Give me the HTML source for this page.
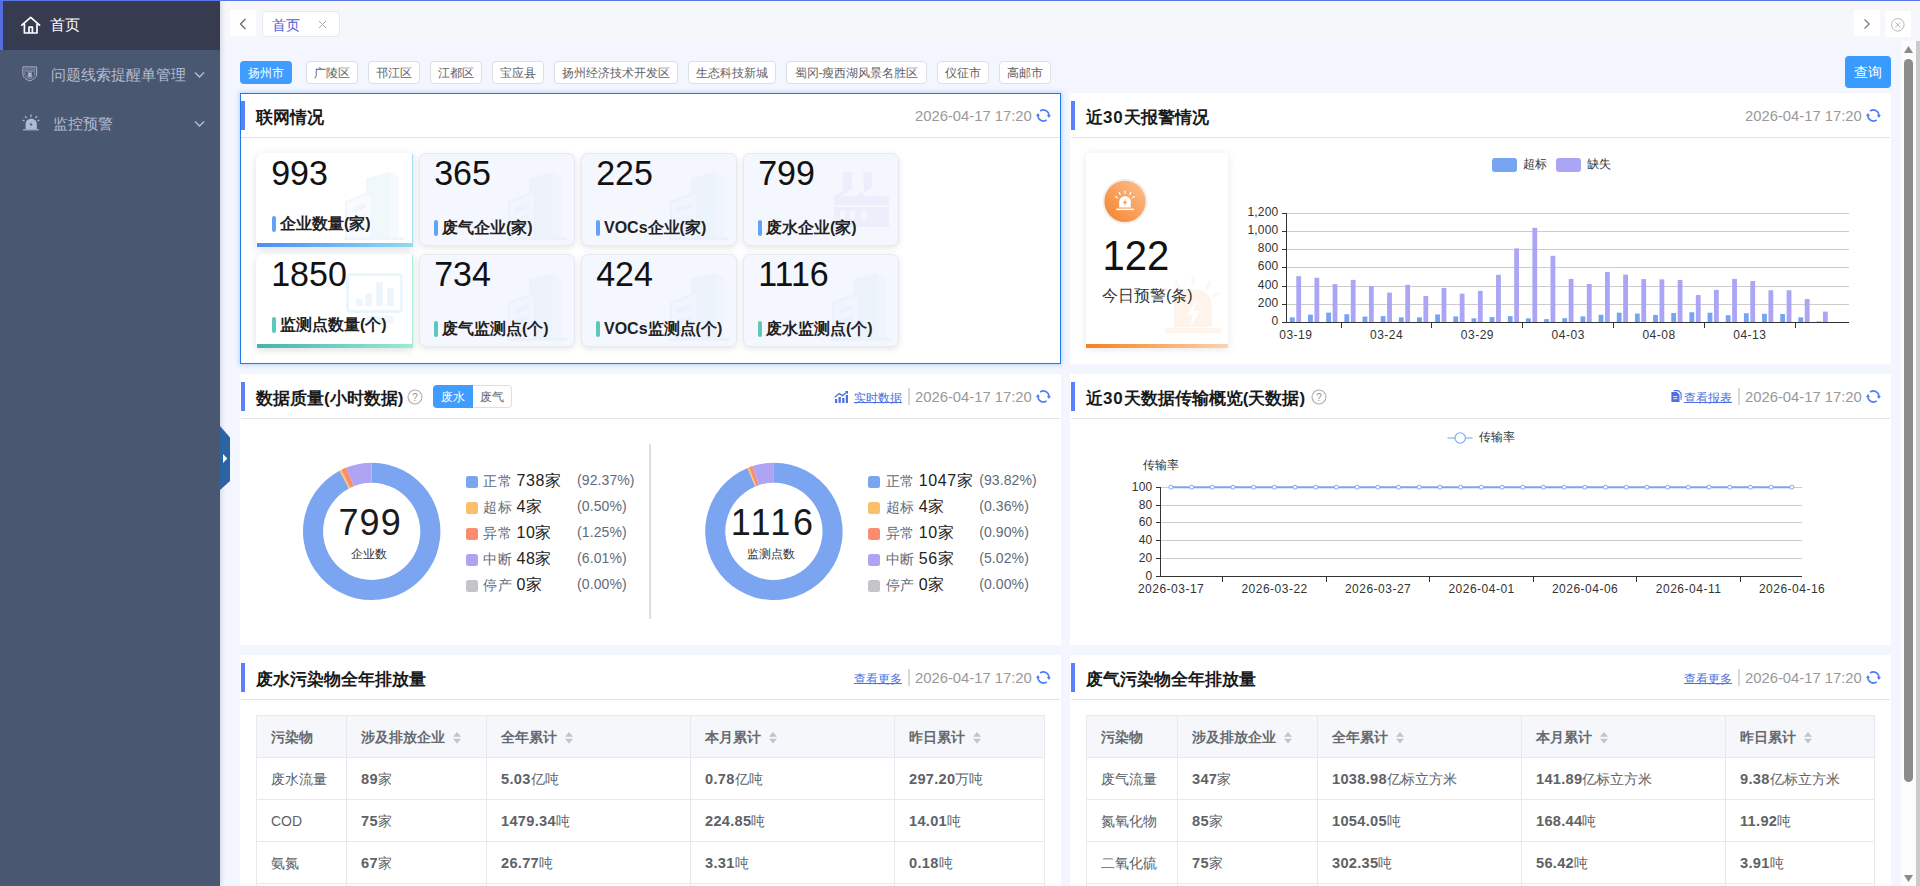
<!DOCTYPE html><html><head><meta charset="utf-8"><title>dashboard</title><style>
html,body{margin:0;padding:0}body{width:1920px;height:886px;overflow:hidden;position:relative;background:#f3f6fe;font-family:"Liberation Sans", sans-serif;}
div{box-sizing:border-box}svg{position:absolute;overflow:visible}
</style></head><body>
<div style="position:absolute;left:220px;top:0px;width:1700px;height:41px;background:#f5f7fa"></div>
<div style="position:absolute;left:0px;top:0px;width:1920px;height:1px;background:#5a76e8;z-index:50"></div>
<div style="position:absolute;left:0px;top:0px;width:220px;height:886px;background:#4a5770;box-shadow:1px 0 5px rgba(0,21,41,.16);z-index:20"></div>
<div style="position:absolute;left:0;top:0;width:220px;height:886px;z-index:21">
<div style="position:absolute;left:0px;top:1px;width:220px;height:49px;background:#363b4f"></div>
<div style="position:absolute;left:0px;top:1px;width:3px;height:49px;background:#566ddf"></div>
<svg style="left:20px;top:15px" width="22" height="20" viewBox="0 0 22 20"><path d="M1.8 10.2 L10.7 2.4 L19.6 10.2 M4.4 9 V18 H17 V9 M9 18 V12.2 H12.4 V18" fill="none" stroke="#fff" stroke-width="1.7" stroke-linejoin="round" stroke-linecap="round"/></svg>
<div style="position:absolute;top:15.40px;line-height:20px;font-size:15px;color:#fff;font-weight:normal;white-space:nowrap;left:50.00px;">首页</div>
<svg style="left:22px;top:66px" width="16" height="16" viewBox="0 0 16 16"><path d="M0.9 0.9 H14.7 V8 C14.7 11.4 11.5 13.6 7.8 14.9 C4.1 13.6 0.9 11.4 0.9 8 Z" fill="none" stroke="#aeb5d1" stroke-width="1"/><path d="M2.9 2.9 H12.7 V8 C12.7 10.2 10.5 11.7 7.8 12.7 C5.1 11.7 2.9 10.2 2.9 8 Z" fill="none" stroke="#aeb5d1" stroke-width=".8" opacity=".75"/><g fill="#aeb5d1"><rect x="5.8" y="6.4" width="4" height="4.8" opacity=".9"/><rect x="4.4" y="4.2" width="1.3" height="1.7" opacity=".8"/><rect x="6.5" y="4.2" width="1.3" height="1.7" opacity=".8"/><rect x="8.6" y="4.2" width="1.3" height="1.7" opacity=".8"/><rect x="10.4" y="4.2" width="1.1" height="1.7" opacity=".8"/></g></svg>
<div style="position:absolute;top:64.60px;line-height:20px;font-size:15px;color:#b3bbd3;font-weight:normal;white-space:nowrap;left:51.00px;">问题线索提醒单管理</div>
<svg style="left:194px;top:71px" width="11" height="8" viewBox="0 0 11 8"><path d="M1 1.5 L5.5 6 L10 1.5" fill="none" stroke="#b3bbd3" stroke-width="1.5"/></svg>
<svg style="left:22px;top:114px" width="18" height="17" viewBox="0 0 18 17"><path d="M3.6 15.2 V10.5 C3.6 7 5.8 4.8 9.2 4.8 C12.6 4.8 14.8 7 14.8 10.5 V15.2 Z" fill="#b3bad3"/><path d="M1 15.8 H17" stroke="#b3bad3" stroke-width="1.1"/><path d="M9 0.5 V3 M3 2.2 L4.6 4.2 M15 2.2 L13.4 4.2 M0.6 6 L2.6 7 M17.4 6 L15.4 7" stroke="#b3bad3" stroke-width="1.2"/><path d="M9.6 7.5 L7.6 11 H9.2 L8.4 13.6 L10.6 10 H9 Z" fill="#4a5770"/></svg>
<div style="position:absolute;top:113.50px;line-height:20px;font-size:15px;color:#b3bbd3;font-weight:normal;white-space:nowrap;left:53.00px;">监控预警</div>
<svg style="left:194px;top:120px" width="11" height="8" viewBox="0 0 11 8"><path d="M1 1.5 L5.5 6 L10 1.5" fill="none" stroke="#b3bbd3" stroke-width="1.5"/></svg>
</div>
<svg style="left:220px;top:426px;z-index:30" width="10" height="64" viewBox="0 0 10 64"><path d="M0 0 L10 11.5 V55 L0 64 Z" fill="#2d62a3"/><path d="M3 28 L7.3 32.5 L3 37 Z" fill="#fff"/></svg>
<div style="position:absolute;left:230px;top:10px;width:26px;height:26px;background:#fff"></div>
<svg style="left:239.3px;top:18px" width="8" height="12" viewBox="0 0 8 12"><path d="M6.5 1 L1.5 6 L6.5 11" fill="none" stroke="#666" stroke-width="1.3"/></svg>
<div style="position:absolute;left:262px;top:11px;width:78px;height:26px;background:#fff;border:1px solid #e6e8ee;border-radius:4px"></div>
<div style="position:absolute;top:14.60px;line-height:20px;font-size:14px;color:#4f5fd6;font-weight:normal;white-space:nowrap;left:272.00px;">首页</div>
<svg style="left:318px;top:20px" width="9" height="9" viewBox="0 0 9 9"><path d="M1 1 L8 8 M8 1 L1 8" stroke="#aaa" stroke-width="1"/></svg>
<div style="position:absolute;left:1854px;top:10px;width:26px;height:26px;background:#fff"></div>
<svg style="left:1863px;top:18.3px" width="8" height="12" viewBox="0 0 8 12"><path d="M1.5 1.4 L6.2 6 L1.5 10.6" fill="none" stroke="#888" stroke-width="1.4"/></svg>
<div style="position:absolute;left:1885px;top:11px;width:26px;height:26px;background:#fff"></div>
<svg style="left:1890px;top:17px" width="16" height="16" viewBox="0 0 16 16"><circle cx="7.8" cy="7.8" r="6.3" fill="none" stroke="#b5b0ac" stroke-width="0.9"/><path d="M5.3 5.3 L10.3 10.3 M10.3 5.3 L5.3 10.3" stroke="#aaa" stroke-width="0.9"/></svg>
<div style="position:absolute;left:240px;top:61px;width:52px;height:23px;background:#3f9dff;border-radius:4px;color:#fff;font-size:12px;line-height:24px;text-align:center;white-space:nowrap">扬州市</div>
<div style="position:absolute;left:306px;top:61px;width:52px;height:23px;background:#fff;border:1px solid #dcdfe6;border-radius:4px;color:#5f6266;font-size:12px;line-height:22px;text-align:center;white-space:nowrap">广陵区</div>
<div style="position:absolute;left:368px;top:61px;width:52px;height:23px;background:#fff;border:1px solid #dcdfe6;border-radius:4px;color:#5f6266;font-size:12px;line-height:22px;text-align:center;white-space:nowrap">邗江区</div>
<div style="position:absolute;left:430px;top:61px;width:52px;height:23px;background:#fff;border:1px solid #dcdfe6;border-radius:4px;color:#5f6266;font-size:12px;line-height:22px;text-align:center;white-space:nowrap">江都区</div>
<div style="position:absolute;left:492px;top:61px;width:52px;height:23px;background:#fff;border:1px solid #dcdfe6;border-radius:4px;color:#5f6266;font-size:12px;line-height:22px;text-align:center;white-space:nowrap">宝应县</div>
<div style="position:absolute;left:554px;top:61px;width:124px;height:23px;background:#fff;border:1px solid #dcdfe6;border-radius:4px;color:#5f6266;font-size:12px;line-height:22px;text-align:center;white-space:nowrap">扬州经济技术开发区</div>
<div style="position:absolute;left:688px;top:61px;width:88px;height:23px;background:#fff;border:1px solid #dcdfe6;border-radius:4px;color:#5f6266;font-size:12px;line-height:22px;text-align:center;white-space:nowrap">生态科技新城</div>
<div style="position:absolute;left:786px;top:61px;width:141px;height:23px;background:#fff;border:1px solid #dcdfe6;border-radius:4px;color:#5f6266;font-size:12px;line-height:22px;text-align:center;white-space:nowrap">蜀冈-瘦西湖风景名胜区</div>
<div style="position:absolute;left:937px;top:61px;width:52px;height:23px;background:#fff;border:1px solid #dcdfe6;border-radius:4px;color:#5f6266;font-size:12px;line-height:22px;text-align:center;white-space:nowrap">仪征市</div>
<div style="position:absolute;left:999px;top:61px;width:52px;height:23px;background:#fff;border:1px solid #dcdfe6;border-radius:4px;color:#5f6266;font-size:12px;line-height:22px;text-align:center;white-space:nowrap">高邮市</div>
<div style="position:absolute;left:1845px;top:56px;width:46px;height:32px;background:#3a9bff;border-radius:4px;color:#fff;font-size:14px;line-height:32px;text-align:center;white-space:nowrap">查询</div>
<div style="position:absolute;left:1901px;top:41px;width:15px;height:845px;background:#fcfcfc"></div>
<div style="position:absolute;left:1916px;top:41px;width:4px;height:845px;background:#cbcbcb"></div>
<div style="position:absolute;left:1904px;top:59px;width:9px;height:723px;background:#8c8c8c;border-radius:4.5px"></div>
<svg style="left:1904px;top:46px" width="9" height="7" viewBox="0 0 9 7"><path d="M0 7 L4.5 0 L9 7 Z" fill="#8a8a8a"/></svg>
<svg style="left:1904px;top:875px" width="9" height="7" viewBox="0 0 9 7"><path d="M0 0 L4.5 7 L9 0 Z" fill="#8a8a8a"/></svg>
<div style="position:absolute;left:240px;top:93px;width:821px;height:271px;background:#fff;border:1px solid #1f7be6;box-shadow:0 0 4px 1px rgba(64,150,255,.35)"></div>
<div style="position:absolute;left:241px;top:101px;width:4px;height:29px;background:#5b80fb"></div>
<div style="position:absolute;left:241px;top:137px;width:819px;height:1px;background:#e4e4e4"></div>
<div style="position:absolute;top:107.50px;line-height:20px;font-size:17px;color:#1a1a1a;font-weight:bold;white-space:nowrap;left:256.00px;">联网情况</div>
<div style="position:absolute;top:105.80px;line-height:20px;font-size:14.8px;color:#999;font-weight:normal;white-space:nowrap;right:888.20px;text-align:right;">2026-04-17 17:20</div>
<svg style="left:1036px;top:109px" width="15" height="14" viewBox="0 0 15 14"><g fill="none" stroke="#4d7cf5" stroke-width="1.6"><path d="M4.1 2.1 A5.5 5.5 0 0 1 12.9 6.2"/><path d="M10.7 10.9 A5.5 5.5 0 0 1 1.9 6.8"/></g><path d="M10.9 5.9 H14.9 L12.9 9.1 Z" fill="#4d7cf5"/><path d="M0 7.1 H3.9 L1.95 3.9 Z" fill="#4d7cf5"/></svg>
<div style="position:absolute;left:256px;top:153px;width:157px;height:94px;background:#fff;border-radius:7px 0 0 0;box-shadow:0 2px 8px rgba(0,0,0,.13);"></div>
<div style="position:absolute;left:412px;top:154px;width:1px;height:93px;background:#a5dcf2"></div>
<div style="position:absolute;left:256.5px;top:243px;width:156.5px;height:4px;background:linear-gradient(90deg,#4b8df5,#8fdcf2)"></div>
<svg style="left:344px;top:172px" width="60" height="70" viewBox="0 0 60 70"><g fill="#f0f7fc"><path d="M22 6 L46 0 V66 H22 Z" opacity=".9"/><path d="M46 0 L55 5 V66 H46 Z" opacity=".6"/><path d="M2 30 L28 20 V66 H2 Z" fill="#f9fcfe" stroke="#f0f7fc" stroke-width="2"/><path d="M8 36 L22 31 V36 L8 41 Z M8 46 L22 42 V47 L8 51 Z M8 56 L22 53 V58 L8 61 Z"/><rect x="0" y="65" width="60" height="3"/></g></svg>
<div style="position:absolute;top:151.60px;line-height:40px;font-size:34px;color:#111;font-weight:normal;white-space:nowrap;left:271.20px;transform:scaleY(1.055);transform-origin:50% 50%;">993</div>
<div style="position:absolute;left:272px;top:216px;width:4px;height:16px;background:#63a3f6;border-radius:2px"></div>
<div style="position:absolute;top:214.30px;line-height:20px;font-size:16px;color:#222;font-weight:bold;white-space:nowrap;left:280.00px;">企业数量(家)</div>
<div style="position:absolute;left:418.5px;top:153px;width:156px;height:93px;background:#f4f7fe;border:1px solid #e7e9f0;border-radius:7px;box-shadow:0 2px 6px rgba(0,0,0,.10);"></div>
<svg style="left:507px;top:172px" width="60" height="70" viewBox="0 0 60 70"><g fill="#ecf2fb"><path d="M22 6 L46 0 V66 H22 Z" opacity=".9"/><path d="M46 0 L55 5 V66 H46 Z" opacity=".6"/><path d="M2 30 L28 20 V66 H2 Z" fill="#f1f5fd" stroke="#ecf2fb" stroke-width="2"/><path d="M8 36 L22 31 V36 L8 41 Z M8 46 L22 42 V47 L8 51 Z M8 56 L22 53 V58 L8 61 Z"/><rect x="0" y="65" width="60" height="3"/></g></svg>
<div style="position:absolute;top:151.60px;line-height:40px;font-size:34px;color:#111;font-weight:normal;white-space:nowrap;left:434.20px;transform:scaleY(1.055);transform-origin:50% 50%;">365</div>
<div style="position:absolute;left:434px;top:219.5px;width:4px;height:16px;background:#63a3f6;border-radius:2px"></div>
<div style="position:absolute;top:217.80px;line-height:20px;font-size:16px;color:#222;font-weight:bold;white-space:nowrap;left:442.00px;">废气企业(家)</div>
<div style="position:absolute;left:580.5px;top:153px;width:156px;height:93px;background:#f4f7fe;border:1px solid #e7e9f0;border-radius:7px;box-shadow:0 2px 6px rgba(0,0,0,.10);"></div>
<svg style="left:669px;top:172px" width="60" height="70" viewBox="0 0 60 70"><g fill="#ecf2fb"><path d="M22 6 L46 0 V66 H22 Z" opacity=".9"/><path d="M46 0 L55 5 V66 H46 Z" opacity=".6"/><path d="M2 30 L28 20 V66 H2 Z" fill="#f1f5fd" stroke="#ecf2fb" stroke-width="2"/><path d="M8 36 L22 31 V36 L8 41 Z M8 46 L22 42 V47 L8 51 Z M8 56 L22 53 V58 L8 61 Z"/><rect x="0" y="65" width="60" height="3"/></g></svg>
<div style="position:absolute;top:151.60px;line-height:40px;font-size:34px;color:#111;font-weight:normal;white-space:nowrap;left:596.20px;transform:scaleY(1.055);transform-origin:50% 50%;">225</div>
<div style="position:absolute;left:596px;top:219.5px;width:4px;height:16px;background:#63a3f6;border-radius:2px"></div>
<div style="position:absolute;top:217.80px;line-height:20px;font-size:16px;color:#222;font-weight:bold;white-space:nowrap;left:604.00px;">VOCs企业(家)</div>
<div style="position:absolute;left:742.5px;top:153px;width:156px;height:93px;background:#f4f7fe;border:1px solid #e7e9f0;border-radius:7px;box-shadow:0 2px 6px rgba(0,0,0,.10);"></div>
<svg style="left:834px;top:172px" width="56" height="56" viewBox="0 0 56 56"><g fill="#eceffb"><path d="M9 0 H18 V17 L9 23 Z"/><path d="M29 0 H38 V15 L30 21 Z"/><path d="M0 24 L9 19 V24 H22 L29 19 V24 H40 L42 22 V24 H55 V33 H0 Z"/><path d="M0 35 H55 V55 H0 Z M6 39 V47 H11 V39 Z M16 39 V47 H21 V39 Z M27 39 V47 H33 V39 Z" fill-rule="evenodd"/></g></svg>
<div style="position:absolute;top:151.60px;line-height:40px;font-size:34px;color:#111;font-weight:normal;white-space:nowrap;left:758.20px;transform:scaleY(1.055);transform-origin:50% 50%;">799</div>
<div style="position:absolute;left:758px;top:219.5px;width:4px;height:16px;background:#63a3f6;border-radius:2px"></div>
<div style="position:absolute;top:217.80px;line-height:20px;font-size:16px;color:#222;font-weight:bold;white-space:nowrap;left:766.00px;">废水企业(家)</div>
<div style="position:absolute;left:256px;top:254px;width:157px;height:94px;background:#fff;border-radius:7px 0 0 0;box-shadow:0 2px 8px rgba(0,0,0,.13);"></div>
<div style="position:absolute;left:412px;top:255px;width:1px;height:93px;background:#a9ecd8"></div>
<div style="position:absolute;left:256.5px;top:344px;width:156.5px;height:4px;background:linear-gradient(90deg,#44b3ad,#9debd3)"></div>
<svg style="left:345px;top:272px" width="60" height="56" viewBox="0 0 60 56"><rect x="2.5" y="2.5" width="54" height="37" rx="3" fill="none" stroke="#ebf5fc" stroke-width="3"/><g fill="#ecf5fc"><rect x="11" y="27.2" width="6.5" height="6.8"/><rect x="20.6" y="21.5" width="6.5" height="12.5"/><rect x="31.2" y="9.8" width="6.5" height="24.2"/><rect x="42.2" y="15.8" width="6.5" height="18.2"/><rect x="21" y="44" width="28" height="8" opacity=".75"/></g></svg>
<div style="position:absolute;top:252.60px;line-height:40px;font-size:34px;color:#111;font-weight:normal;white-space:nowrap;left:271.20px;transform:scaleY(1.055);transform-origin:50% 50%;">1850</div>
<div style="position:absolute;left:272px;top:317px;width:4px;height:16px;background:#5cc8bb;border-radius:2px"></div>
<div style="position:absolute;top:315.30px;line-height:20px;font-size:16px;color:#222;font-weight:bold;white-space:nowrap;left:280.00px;">监测点数量(个)</div>
<div style="position:absolute;left:418.5px;top:254px;width:156px;height:93px;background:#f4f7fe;border:1px solid #e7e9f0;border-radius:7px;box-shadow:0 2px 6px rgba(0,0,0,.10);"></div>
<svg style="left:507px;top:273px" width="60" height="70" viewBox="0 0 60 70"><g fill="#ecf2fb"><path d="M22 6 L46 0 V66 H22 Z" opacity=".9"/><path d="M46 0 L55 5 V66 H46 Z" opacity=".6"/><path d="M2 30 L28 20 V66 H2 Z" fill="#f1f5fd" stroke="#ecf2fb" stroke-width="2"/><path d="M8 36 L22 31 V36 L8 41 Z M8 46 L22 42 V47 L8 51 Z M8 56 L22 53 V58 L8 61 Z"/><rect x="0" y="65" width="60" height="3"/></g></svg>
<div style="position:absolute;top:252.60px;line-height:40px;font-size:34px;color:#111;font-weight:normal;white-space:nowrap;left:434.20px;transform:scaleY(1.055);transform-origin:50% 50%;">734</div>
<div style="position:absolute;left:434px;top:320.5px;width:4px;height:16px;background:#5cc8bb;border-radius:2px"></div>
<div style="position:absolute;top:318.80px;line-height:20px;font-size:16px;color:#222;font-weight:bold;white-space:nowrap;left:442.00px;">废气监测点(个)</div>
<div style="position:absolute;left:580.5px;top:254px;width:156px;height:93px;background:#f4f7fe;border:1px solid #e7e9f0;border-radius:7px;box-shadow:0 2px 6px rgba(0,0,0,.10);"></div>
<svg style="left:669px;top:273px" width="60" height="70" viewBox="0 0 60 70"><g fill="#ecf2fb"><path d="M22 6 L46 0 V66 H22 Z" opacity=".9"/><path d="M46 0 L55 5 V66 H46 Z" opacity=".6"/><path d="M2 30 L28 20 V66 H2 Z" fill="#f1f5fd" stroke="#ecf2fb" stroke-width="2"/><path d="M8 36 L22 31 V36 L8 41 Z M8 46 L22 42 V47 L8 51 Z M8 56 L22 53 V58 L8 61 Z"/><rect x="0" y="65" width="60" height="3"/></g></svg>
<div style="position:absolute;top:252.60px;line-height:40px;font-size:34px;color:#111;font-weight:normal;white-space:nowrap;left:596.20px;transform:scaleY(1.055);transform-origin:50% 50%;">424</div>
<div style="position:absolute;left:596px;top:320.5px;width:4px;height:16px;background:#5cc8bb;border-radius:2px"></div>
<div style="position:absolute;top:318.80px;line-height:20px;font-size:16px;color:#222;font-weight:bold;white-space:nowrap;left:604.00px;">VOCs监测点(个)</div>
<div style="position:absolute;left:742.5px;top:254px;width:156px;height:93px;background:#f4f7fe;border:1px solid #e7e9f0;border-radius:7px;box-shadow:0 2px 6px rgba(0,0,0,.10);"></div>
<svg style="left:831px;top:273px" width="60" height="70" viewBox="0 0 60 70"><g fill="#ecf2fb"><path d="M22 6 L46 0 V66 H22 Z" opacity=".9"/><path d="M46 0 L55 5 V66 H46 Z" opacity=".6"/><path d="M2 30 L28 20 V66 H2 Z" fill="#f1f5fd" stroke="#ecf2fb" stroke-width="2"/><path d="M8 36 L22 31 V36 L8 41 Z M8 46 L22 42 V47 L8 51 Z M8 56 L22 53 V58 L8 61 Z"/><rect x="0" y="65" width="60" height="3"/></g></svg>
<div style="position:absolute;top:252.60px;line-height:40px;font-size:34px;color:#111;font-weight:normal;white-space:nowrap;left:758.20px;transform:scaleY(1.055);transform-origin:50% 50%;">1116</div>
<div style="position:absolute;left:758px;top:320.5px;width:4px;height:16px;background:#5cc8bb;border-radius:2px"></div>
<div style="position:absolute;top:318.80px;line-height:20px;font-size:16px;color:#222;font-weight:bold;white-space:nowrap;left:766.00px;">废水监测点(个)</div>
<div style="position:absolute;left:1070px;top:93px;width:821px;height:271px;background:#fff"></div>
<div style="position:absolute;left:1071px;top:101px;width:4px;height:29px;background:#5b80fb"></div>
<div style="position:absolute;left:1071px;top:137px;width:819px;height:1px;background:#e4e4e4"></div>
<div style="position:absolute;top:107.50px;line-height:20px;font-size:17px;color:#1a1a1a;font-weight:bold;white-space:nowrap;left:1086.00px;">近<span style="letter-spacing:.9px">30</span>天报警情况</div>
<div style="position:absolute;top:105.80px;line-height:20px;font-size:14.8px;color:#999;font-weight:normal;white-space:nowrap;right:58.20px;text-align:right;">2026-04-17 17:20</div>
<svg style="left:1866px;top:109px" width="15" height="14" viewBox="0 0 15 14"><g fill="none" stroke="#4d7cf5" stroke-width="1.6"><path d="M4.1 2.1 A5.5 5.5 0 0 1 12.9 6.2"/><path d="M10.7 10.9 A5.5 5.5 0 0 1 1.9 6.8"/></g><path d="M10.9 5.9 H14.9 L12.9 9.1 Z" fill="#4d7cf5"/><path d="M0 7.1 H3.9 L1.95 3.9 Z" fill="#4d7cf5"/></svg>
<div style="position:absolute;left:1086px;top:153px;width:142px;height:195px;background:#fff;border-radius:4px 4px 0 0;box-shadow:0 1px 8px rgba(0,0,0,.10)"></div>
<div style="position:absolute;left:1086px;top:344px;width:142px;height:4px;background:linear-gradient(90deg,#f5811e,#fdd3b0)"></div>
<svg style="left:1164px;top:276.5px" width="58" height="58" viewBox="0 0 58 58"><g fill="#fef4ec"><path d="M10 50 V30 C10 18 18 12 29 12 C40 12 48 18 48 30 V50 Z"/><rect x="1" y="51" width="56" height="5"/></g><g stroke="#fef6f0" stroke-width="3.2" stroke-linecap="round"><path d="M29 1 V7 M12 5 L15 11 M46 5 L43 11 M55 16 L50 19"/></g><path d="M32 24 L23 38 H29 L26 50 L36 34 H30 Z" fill="#fff"/></svg>
<svg style="left:1101.7px;top:178.3px" width="46" height="46" viewBox="0 0 46 46"><defs><linearGradient id="og" x1="0" y1="1" x2="1" y2="0"><stop offset="0" stop-color="#f5812a"/><stop offset="1" stop-color="#fcc192"/></linearGradient></defs><circle cx="23" cy="23.4" r="22.6" fill="#f1efee"/><circle cx="23" cy="23.4" r="20.6" fill="url(#og)"/><g fill="#fff"><path d="M17.2 29.6 V24 C17.2 20.4 19.6 18.2 23 18.2 C26.4 18.2 28.8 20.4 28.8 24 V29.6 Z"/><rect x="14.2" y="30.6" width="17.6" height="1.5"/></g><g stroke="#fff" stroke-width="1.2" stroke-linecap="round"><path d="M23 13 V15.4 M17.2 14.6 L18.2 16.6 M28.8 14.6 L27.8 16.6 M13.6 18.6 L15.4 19.8 M32.4 18.6 L30.6 19.8"/></g><path d="M23.9 20.6 L21 25.2 H22.9 L22 28.6 L25 23.8 H23.1 Z" fill="#f58f3a"/></svg>
<div style="position:absolute;top:232.40px;line-height:46px;font-size:40px;color:#111;font-weight:normal;white-space:nowrap;left:1102.60px;transform:scaleY(1.04);transform-origin:50% 50%;">122</div>
<div style="position:absolute;top:286.40px;line-height:20px;font-size:16px;color:#333;font-weight:normal;white-space:nowrap;left:1102.00px;">今日预警(条)</div>
<div style="position:absolute;left:1492px;top:158px;width:25px;height:14px;background:#76a4f3;border-radius:3px"></div>
<div style="position:absolute;top:154.20px;line-height:20px;font-size:12px;color:#333;font-weight:normal;white-space:nowrap;left:1523.00px;">超标</div>
<div style="position:absolute;left:1556px;top:158px;width:25px;height:14px;background:#aaa5f4;border-radius:3px"></div>
<div style="position:absolute;top:154.20px;line-height:20px;font-size:12px;color:#333;font-weight:normal;white-space:nowrap;left:1587.00px;">缺失</div>
<svg style="left:0;top:0" width="1920" height="886" viewBox="0 0 1920 886"><g shape-rendering="crispEdges" stroke="#ccc" stroke-width="1"><path d="M1286.5 304.5 H1849"/><path d="M1286.5 286.5 H1849"/><path d="M1286.5 267.5 H1849"/><path d="M1286.5 249.5 H1849"/><path d="M1286.5 231.5 H1849"/><path d="M1286.5 213.5 H1849"/></g><g><rect x="1289.90" y="317.32" width="4.8" height="4.68" fill="#76a4f3"/><rect x="1296.30" y="276.18" width="4.8" height="45.82" fill="#aaa5f4"/><rect x="1308.06" y="314.60" width="4.8" height="7.40" fill="#76a4f3"/><rect x="1314.46" y="277.72" width="4.8" height="44.28" fill="#aaa5f4"/><rect x="1326.22" y="312.60" width="4.8" height="9.40" fill="#76a4f3"/><rect x="1332.62" y="284.17" width="4.8" height="37.83" fill="#aaa5f4"/><rect x="1344.38" y="314.23" width="4.8" height="7.77" fill="#76a4f3"/><rect x="1350.78" y="279.90" width="4.8" height="42.10" fill="#aaa5f4"/><rect x="1362.54" y="316.60" width="4.8" height="5.40" fill="#76a4f3"/><rect x="1368.94" y="286.17" width="4.8" height="35.83" fill="#aaa5f4"/><rect x="1380.70" y="316.14" width="4.8" height="5.86" fill="#76a4f3"/><rect x="1387.10" y="292.62" width="4.8" height="29.38" fill="#aaa5f4"/><rect x="1398.86" y="317.32" width="4.8" height="4.68" fill="#76a4f3"/><rect x="1405.26" y="284.80" width="4.8" height="37.20" fill="#aaa5f4"/><rect x="1417.02" y="317.32" width="4.8" height="4.68" fill="#76a4f3"/><rect x="1423.42" y="295.98" width="4.8" height="26.02" fill="#aaa5f4"/><rect x="1435.18" y="314.42" width="4.8" height="7.58" fill="#76a4f3"/><rect x="1441.58" y="287.89" width="4.8" height="34.11" fill="#aaa5f4"/><rect x="1453.34" y="316.41" width="4.8" height="5.59" fill="#76a4f3"/><rect x="1459.74" y="293.62" width="4.8" height="28.38" fill="#aaa5f4"/><rect x="1471.50" y="318.32" width="4.8" height="3.68" fill="#76a4f3"/><rect x="1477.90" y="290.89" width="4.8" height="31.11" fill="#aaa5f4"/><rect x="1489.66" y="317.14" width="4.8" height="4.86" fill="#76a4f3"/><rect x="1496.06" y="274.81" width="4.8" height="47.19" fill="#aaa5f4"/><rect x="1507.82" y="316.14" width="4.8" height="5.86" fill="#76a4f3"/><rect x="1514.22" y="248.38" width="4.8" height="73.62" fill="#aaa5f4"/><rect x="1525.98" y="318.32" width="4.8" height="3.68" fill="#76a4f3"/><rect x="1532.38" y="227.85" width="4.8" height="94.15" fill="#aaa5f4"/><rect x="1544.14" y="319.14" width="4.8" height="2.86" fill="#76a4f3"/><rect x="1550.54" y="255.83" width="4.8" height="66.17" fill="#aaa5f4"/><rect x="1562.30" y="318.14" width="4.8" height="3.86" fill="#76a4f3"/><rect x="1568.70" y="278.90" width="4.8" height="43.10" fill="#aaa5f4"/><rect x="1580.46" y="316.41" width="4.8" height="5.59" fill="#76a4f3"/><rect x="1586.86" y="283.99" width="4.8" height="38.01" fill="#aaa5f4"/><rect x="1598.62" y="314.78" width="4.8" height="7.22" fill="#76a4f3"/><rect x="1605.02" y="271.91" width="4.8" height="50.09" fill="#aaa5f4"/><rect x="1616.78" y="312.69" width="4.8" height="9.31" fill="#76a4f3"/><rect x="1623.18" y="274.63" width="4.8" height="47.37" fill="#aaa5f4"/><rect x="1634.94" y="313.60" width="4.8" height="8.40" fill="#76a4f3"/><rect x="1641.34" y="279.08" width="4.8" height="42.92" fill="#aaa5f4"/><rect x="1653.10" y="314.96" width="4.8" height="7.04" fill="#76a4f3"/><rect x="1659.50" y="279.35" width="4.8" height="42.65" fill="#aaa5f4"/><rect x="1671.26" y="313.05" width="4.8" height="8.95" fill="#76a4f3"/><rect x="1677.66" y="279.90" width="4.8" height="42.10" fill="#aaa5f4"/><rect x="1689.42" y="312.24" width="4.8" height="9.76" fill="#76a4f3"/><rect x="1695.82" y="294.98" width="4.8" height="27.02" fill="#aaa5f4"/><rect x="1707.58" y="312.69" width="4.8" height="9.31" fill="#76a4f3"/><rect x="1713.98" y="289.89" width="4.8" height="32.11" fill="#aaa5f4"/><rect x="1725.74" y="315.23" width="4.8" height="6.77" fill="#76a4f3"/><rect x="1732.14" y="278.90" width="4.8" height="43.10" fill="#aaa5f4"/><rect x="1743.90" y="313.24" width="4.8" height="8.76" fill="#76a4f3"/><rect x="1750.30" y="281.08" width="4.8" height="40.92" fill="#aaa5f4"/><rect x="1762.06" y="313.78" width="4.8" height="8.22" fill="#76a4f3"/><rect x="1768.46" y="290.25" width="4.8" height="31.75" fill="#aaa5f4"/><rect x="1780.22" y="314.05" width="4.8" height="7.95" fill="#76a4f3"/><rect x="1786.62" y="290.25" width="4.8" height="31.75" fill="#aaa5f4"/><rect x="1798.38" y="317.32" width="4.8" height="4.68" fill="#76a4f3"/><rect x="1804.78" y="299.06" width="4.8" height="22.94" fill="#aaa5f4"/><rect x="1816.54" y="321.41" width="4.8" height="0.59" fill="#76a4f3"/><rect x="1822.94" y="311.60" width="4.8" height="10.40" fill="#aaa5f4"/></g><g shape-rendering="crispEdges" stroke="#333" stroke-width="1"><path d="M1286.5 213 V323"/><path d="M1286.5 322.5 H1849"/><path d="M1281.5 322.5 H1286.5"/><path d="M1281.5 304.5 H1286.5"/><path d="M1281.5 286.5 H1286.5"/><path d="M1281.5 267.5 H1286.5"/><path d="M1281.5 249.5 H1286.5"/><path d="M1281.5 231.5 H1286.5"/><path d="M1281.5 213.5 H1286.5"/><path d="M1341.5 322.5 V327.5"/><path d="M1431.5 322.5 V327.5"/><path d="M1522.5 322.5 V327.5"/><path d="M1613.5 322.5 V327.5"/><path d="M1704.5 322.5 V327.5"/><path d="M1795.5 322.5 V327.5"/></g></svg>
<div style="position:absolute;top:311.30px;line-height:20px;font-size:12px;color:#333;font-weight:normal;white-space:nowrap;right:641.70px;text-align:right;letter-spacing:.15px;">0</div>
<div style="position:absolute;top:293.30px;line-height:20px;font-size:12px;color:#333;font-weight:normal;white-space:nowrap;right:641.70px;text-align:right;letter-spacing:.15px;">200</div>
<div style="position:absolute;top:275.30px;line-height:20px;font-size:12px;color:#333;font-weight:normal;white-space:nowrap;right:641.70px;text-align:right;letter-spacing:.15px;">400</div>
<div style="position:absolute;top:256.30px;line-height:20px;font-size:12px;color:#333;font-weight:normal;white-space:nowrap;right:641.70px;text-align:right;letter-spacing:.15px;">600</div>
<div style="position:absolute;top:238.30px;line-height:20px;font-size:12px;color:#333;font-weight:normal;white-space:nowrap;right:641.70px;text-align:right;letter-spacing:.15px;">800</div>
<div style="position:absolute;top:220.30px;line-height:20px;font-size:12px;color:#333;font-weight:normal;white-space:nowrap;right:641.70px;text-align:right;letter-spacing:.15px;">1,000</div>
<div style="position:absolute;top:202.30px;line-height:20px;font-size:12px;color:#333;font-weight:normal;white-space:nowrap;right:641.70px;text-align:right;letter-spacing:.15px;">1,200</div>
<div style="position:absolute;top:324.60px;line-height:20px;font-size:12px;color:#333;font-weight:normal;white-space:nowrap;left:1095.83px;width:400px;text-align:center;letter-spacing:.5px;">03-19</div>
<div style="position:absolute;top:324.60px;line-height:20px;font-size:12px;color:#333;font-weight:normal;white-space:nowrap;left:1186.63px;width:400px;text-align:center;letter-spacing:.5px;">03-24</div>
<div style="position:absolute;top:324.60px;line-height:20px;font-size:12px;color:#333;font-weight:normal;white-space:nowrap;left:1277.43px;width:400px;text-align:center;letter-spacing:.5px;">03-29</div>
<div style="position:absolute;top:324.60px;line-height:20px;font-size:12px;color:#333;font-weight:normal;white-space:nowrap;left:1368.23px;width:400px;text-align:center;letter-spacing:.5px;">04-03</div>
<div style="position:absolute;top:324.60px;line-height:20px;font-size:12px;color:#333;font-weight:normal;white-space:nowrap;left:1459.03px;width:400px;text-align:center;letter-spacing:.5px;">04-08</div>
<div style="position:absolute;top:324.60px;line-height:20px;font-size:12px;color:#333;font-weight:normal;white-space:nowrap;left:1549.83px;width:400px;text-align:center;letter-spacing:.5px;">04-13</div>
<div style="position:absolute;left:240px;top:374px;width:821px;height:271px;background:#fff"></div>
<div style="position:absolute;left:241px;top:382px;width:4px;height:29px;background:#5b80fb"></div>
<div style="position:absolute;left:241px;top:418px;width:819px;height:1px;background:#e4e4e4"></div>
<div style="position:absolute;top:388.50px;line-height:20px;font-size:17px;color:#1a1a1a;font-weight:bold;white-space:nowrap;left:256.00px;">数据质量(小时数据)</div>
<div style="position:absolute;top:386.80px;line-height:20px;font-size:14.8px;color:#999;font-weight:normal;white-space:nowrap;right:888.20px;text-align:right;">2026-04-17 17:20</div>
<svg style="left:1036px;top:390px" width="15" height="14" viewBox="0 0 15 14"><g fill="none" stroke="#4d7cf5" stroke-width="1.6"><path d="M4.1 2.1 A5.5 5.5 0 0 1 12.9 6.2"/><path d="M10.7 10.9 A5.5 5.5 0 0 1 1.9 6.8"/></g><path d="M10.9 5.9 H14.9 L12.9 9.1 Z" fill="#4d7cf5"/><path d="M0 7.1 H3.9 L1.95 3.9 Z" fill="#4d7cf5"/></svg>
<div style="position:absolute;left:907.5px;top:388px;width:2px;height:17px;background:#d9d9d9"></div>
<div style="position:absolute;top:387.90px;line-height:20px;font-size:12px;color:#4d6fe0;font-weight:normal;white-space:nowrap;right:1018.50px;text-align:right;">实时数据</div>
<div style="position:absolute;left:853.5px;top:402px;width:48px;height:1px;background:#4d6fe0"></div>
<svg style="left:407.4px;top:388.7px" width="16" height="16" viewBox="0 0 16 16"><circle cx="8" cy="8" r="7" fill="none" stroke="#adadad" stroke-width="1.1"/><text x="8" y="11.8" font-size="10.5" text-anchor="middle" fill="#999" font-family='"Liberation Sans", sans-serif'>?</text></svg>
<svg style="left:833.5px;top:390.5px" width="15" height="12" viewBox="0 0 15 12"><g fill="#4d6fe0"><rect x="1" y="8" width="2.2" height="4"/><rect x="4.6" y="6" width="2.2" height="6"/><rect x="8.2" y="7" width="2.2" height="5"/><rect x="11.8" y="4" width="2.2" height="8"/></g><path d="M0.8 6.2 L5.2 2.6 L8.6 4.6 L13 1" fill="none" stroke="#4d6fe0" stroke-width="1.3"/><path d="M10.8 0 H14 V3.2 Z" fill="#4d6fe0"/></svg>
<div style="position:absolute;left:433px;top:385px;width:40px;height:23px;background:#3f9dff;border-radius:4px 0 0 4px;color:#fff;font-size:12px;line-height:24.5px;text-align:center">废水</div>
<div style="position:absolute;left:473px;top:385px;width:39px;height:23px;background:#fff;border:1px solid #dcdfe6;border-left:0;border-radius:0 4px 4px 0;color:#5f6266;font-size:12px;line-height:22.5px;text-align:center">废气</div>
<div style="position:absolute;left:649px;top:444px;width:2px;height:175px;background:#dddee2"></div>
<svg style="left:0;top:0" width="1920" height="886" viewBox="0 0 1920 886"><path d="M371.70 462.70 A68.7 68.7 0 1 1 339.55 470.69 L348.96 488.45 A48.6 48.6 0 1 0 371.70 482.80 Z" fill="#7ba5f1"/><path d="M339.55 470.69 A68.7 68.7 0 0 1 341.48 469.71 L350.32 487.76 A48.6 48.6 0 0 0 348.96 488.45 Z" fill="#fdc06a"/><path d="M341.48 469.71 A68.7 68.7 0 0 1 346.41 467.52 L353.81 486.21 A48.6 48.6 0 0 0 350.32 487.76 Z" fill="#fc8c70"/><path d="M346.41 467.52 A68.7 68.7 0 0 1 371.70 462.70 L371.70 482.80 A48.6 48.6 0 0 0 353.81 486.21 Z" fill="#aea4f3"/></svg>
<div style="position:absolute;top:501.80px;line-height:42px;font-size:36px;color:#1a1a1a;font-weight:normal;white-space:nowrap;left:169.60px;width:400px;text-align:center;letter-spacing:1.1px;padding-left:1.1px;transform:scaleY(1.03);">799</div>
<div style="position:absolute;top:543.80px;line-height:20px;font-size:12px;color:#333;font-weight:normal;white-space:nowrap;left:169.20px;width:400px;text-align:center;">企业数</div>
<div style="position:absolute;left:466px;top:476px;width:12px;height:12px;background:#7ba5f1;border-radius:2.5px"></div>
<div style="position:absolute;top:471.20px;line-height:20px;font-size:14px;color:#606c7c;font-weight:normal;white-space:nowrap;left:483.30px;letter-spacing:.4px;">正常</div>
<div style="position:absolute;top:471.10px;line-height:20px;font-size:16px;color:#222;font-weight:normal;white-space:nowrap;left:516.50px;letter-spacing:.6px;">738家</div>
<div style="position:absolute;top:470.40px;line-height:20px;font-size:14px;color:#5f6b7a;font-weight:normal;white-space:nowrap;left:577.00px;letter-spacing:.1px;">(92.37%)</div>
<div style="position:absolute;left:466px;top:502px;width:12px;height:12px;background:#fdc06a;border-radius:2.5px"></div>
<div style="position:absolute;top:497.20px;line-height:20px;font-size:14px;color:#606c7c;font-weight:normal;white-space:nowrap;left:483.30px;letter-spacing:.4px;">超标</div>
<div style="position:absolute;top:497.10px;line-height:20px;font-size:16px;color:#222;font-weight:normal;white-space:nowrap;left:516.50px;letter-spacing:.6px;">4家</div>
<div style="position:absolute;top:496.40px;line-height:20px;font-size:14px;color:#5f6b7a;font-weight:normal;white-space:nowrap;left:577.00px;letter-spacing:.1px;">(0.50%)</div>
<div style="position:absolute;left:466px;top:528px;width:12px;height:12px;background:#fc8c70;border-radius:2.5px"></div>
<div style="position:absolute;top:523.20px;line-height:20px;font-size:14px;color:#606c7c;font-weight:normal;white-space:nowrap;left:483.30px;letter-spacing:.4px;">异常</div>
<div style="position:absolute;top:523.10px;line-height:20px;font-size:16px;color:#222;font-weight:normal;white-space:nowrap;left:516.50px;letter-spacing:.6px;">10家</div>
<div style="position:absolute;top:522.40px;line-height:20px;font-size:14px;color:#5f6b7a;font-weight:normal;white-space:nowrap;left:577.00px;letter-spacing:.1px;">(1.25%)</div>
<div style="position:absolute;left:466px;top:554px;width:12px;height:12px;background:#aea4f3;border-radius:2.5px"></div>
<div style="position:absolute;top:549.20px;line-height:20px;font-size:14px;color:#606c7c;font-weight:normal;white-space:nowrap;left:483.30px;letter-spacing:.4px;">中断</div>
<div style="position:absolute;top:549.10px;line-height:20px;font-size:16px;color:#222;font-weight:normal;white-space:nowrap;left:516.50px;letter-spacing:.6px;">48家</div>
<div style="position:absolute;top:548.40px;line-height:20px;font-size:14px;color:#5f6b7a;font-weight:normal;white-space:nowrap;left:577.00px;letter-spacing:.1px;">(6.01%)</div>
<div style="position:absolute;left:466px;top:580px;width:12px;height:12px;background:#c4c5ca;border-radius:2.5px"></div>
<div style="position:absolute;top:575.20px;line-height:20px;font-size:14px;color:#606c7c;font-weight:normal;white-space:nowrap;left:483.30px;letter-spacing:.4px;">停产</div>
<div style="position:absolute;top:575.10px;line-height:20px;font-size:16px;color:#222;font-weight:normal;white-space:nowrap;left:516.50px;letter-spacing:.6px;">0家</div>
<div style="position:absolute;top:574.40px;line-height:20px;font-size:14px;color:#5f6b7a;font-weight:normal;white-space:nowrap;left:577.00px;letter-spacing:.1px;">(0.00%)</div>
<svg style="left:0;top:0" width="1920" height="886" viewBox="0 0 1920 886"><path d="M773.90 462.70 A68.7 68.7 0 1 1 747.54 467.96 L755.25 486.52 A48.6 48.6 0 1 0 773.90 482.80 Z" fill="#7ba5f1"/><path d="M747.54 467.96 A68.7 68.7 0 0 1 748.98 467.38 L756.27 486.11 A48.6 48.6 0 0 0 755.25 486.52 Z" fill="#fdc06a"/><path d="M748.98 467.38 A68.7 68.7 0 0 1 752.62 466.08 L758.84 485.19 A48.6 48.6 0 0 0 756.27 486.11 Z" fill="#fc8c70"/><path d="M752.62 466.08 A68.7 68.7 0 0 1 773.90 462.70 L773.90 482.80 A48.6 48.6 0 0 0 758.84 485.19 Z" fill="#aea4f3"/></svg>
<div style="position:absolute;top:501.80px;line-height:42px;font-size:36px;color:#1a1a1a;font-weight:normal;white-space:nowrap;left:571.80px;width:400px;text-align:center;letter-spacing:2.5px;padding-left:2.5px;transform:scaleY(1.03);">1116</div>
<div style="position:absolute;top:543.80px;line-height:20px;font-size:12px;color:#333;font-weight:normal;white-space:nowrap;left:571.40px;width:400px;text-align:center;">监测点数</div>
<div style="position:absolute;left:868.2px;top:476px;width:12px;height:12px;background:#7ba5f1;border-radius:2.5px"></div>
<div style="position:absolute;top:471.20px;line-height:20px;font-size:14px;color:#606c7c;font-weight:normal;white-space:nowrap;left:885.50px;letter-spacing:.4px;">正常</div>
<div style="position:absolute;top:471.10px;line-height:20px;font-size:16px;color:#222;font-weight:normal;white-space:nowrap;left:918.70px;letter-spacing:.6px;">1047家</div>
<div style="position:absolute;top:470.40px;line-height:20px;font-size:14px;color:#5f6b7a;font-weight:normal;white-space:nowrap;left:979.20px;letter-spacing:.1px;">(93.82%)</div>
<div style="position:absolute;left:868.2px;top:502px;width:12px;height:12px;background:#fdc06a;border-radius:2.5px"></div>
<div style="position:absolute;top:497.20px;line-height:20px;font-size:14px;color:#606c7c;font-weight:normal;white-space:nowrap;left:885.50px;letter-spacing:.4px;">超标</div>
<div style="position:absolute;top:497.10px;line-height:20px;font-size:16px;color:#222;font-weight:normal;white-space:nowrap;left:918.70px;letter-spacing:.6px;">4家</div>
<div style="position:absolute;top:496.40px;line-height:20px;font-size:14px;color:#5f6b7a;font-weight:normal;white-space:nowrap;left:979.20px;letter-spacing:.1px;">(0.36%)</div>
<div style="position:absolute;left:868.2px;top:528px;width:12px;height:12px;background:#fc8c70;border-radius:2.5px"></div>
<div style="position:absolute;top:523.20px;line-height:20px;font-size:14px;color:#606c7c;font-weight:normal;white-space:nowrap;left:885.50px;letter-spacing:.4px;">异常</div>
<div style="position:absolute;top:523.10px;line-height:20px;font-size:16px;color:#222;font-weight:normal;white-space:nowrap;left:918.70px;letter-spacing:.6px;">10家</div>
<div style="position:absolute;top:522.40px;line-height:20px;font-size:14px;color:#5f6b7a;font-weight:normal;white-space:nowrap;left:979.20px;letter-spacing:.1px;">(0.90%)</div>
<div style="position:absolute;left:868.2px;top:554px;width:12px;height:12px;background:#aea4f3;border-radius:2.5px"></div>
<div style="position:absolute;top:549.20px;line-height:20px;font-size:14px;color:#606c7c;font-weight:normal;white-space:nowrap;left:885.50px;letter-spacing:.4px;">中断</div>
<div style="position:absolute;top:549.10px;line-height:20px;font-size:16px;color:#222;font-weight:normal;white-space:nowrap;left:918.70px;letter-spacing:.6px;">56家</div>
<div style="position:absolute;top:548.40px;line-height:20px;font-size:14px;color:#5f6b7a;font-weight:normal;white-space:nowrap;left:979.20px;letter-spacing:.1px;">(5.02%)</div>
<div style="position:absolute;left:868.2px;top:580px;width:12px;height:12px;background:#c4c5ca;border-radius:2.5px"></div>
<div style="position:absolute;top:575.20px;line-height:20px;font-size:14px;color:#606c7c;font-weight:normal;white-space:nowrap;left:885.50px;letter-spacing:.4px;">停产</div>
<div style="position:absolute;top:575.10px;line-height:20px;font-size:16px;color:#222;font-weight:normal;white-space:nowrap;left:918.70px;letter-spacing:.6px;">0家</div>
<div style="position:absolute;top:574.40px;line-height:20px;font-size:14px;color:#5f6b7a;font-weight:normal;white-space:nowrap;left:979.20px;letter-spacing:.1px;">(0.00%)</div>
<div style="position:absolute;left:1070px;top:374px;width:821px;height:271px;background:#fff"></div>
<div style="position:absolute;left:1071px;top:382px;width:4px;height:29px;background:#5b80fb"></div>
<div style="position:absolute;left:1071px;top:418px;width:819px;height:1px;background:#e4e4e4"></div>
<div style="position:absolute;top:388.50px;line-height:20px;font-size:17px;color:#1a1a1a;font-weight:bold;white-space:nowrap;left:1086.00px;">近<span style="letter-spacing:.9px">30</span>天数据传输概览(天数据)</div>
<div style="position:absolute;top:386.80px;line-height:20px;font-size:14.8px;color:#999;font-weight:normal;white-space:nowrap;right:58.20px;text-align:right;">2026-04-17 17:20</div>
<svg style="left:1866px;top:390px" width="15" height="14" viewBox="0 0 15 14"><g fill="none" stroke="#4d7cf5" stroke-width="1.6"><path d="M4.1 2.1 A5.5 5.5 0 0 1 12.9 6.2"/><path d="M10.7 10.9 A5.5 5.5 0 0 1 1.9 6.8"/></g><path d="M10.9 5.9 H14.9 L12.9 9.1 Z" fill="#4d7cf5"/><path d="M0 7.1 H3.9 L1.95 3.9 Z" fill="#4d7cf5"/></svg>
<div style="position:absolute;left:1737.5px;top:388px;width:2px;height:17px;background:#d9d9d9"></div>
<div style="position:absolute;top:387.90px;line-height:20px;font-size:12px;color:#4d6fe0;font-weight:normal;white-space:nowrap;right:188.50px;text-align:right;">查看报表</div>
<div style="position:absolute;left:1683.5px;top:402px;width:48px;height:1px;background:#4d6fe0"></div>
<svg style="left:1310.5px;top:388.7px" width="16" height="16" viewBox="0 0 16 16"><circle cx="8" cy="8" r="7" fill="none" stroke="#adadad" stroke-width="1.1"/><text x="8" y="11.8" font-size="10.5" text-anchor="middle" fill="#999" font-family='"Liberation Sans", sans-serif'>?</text></svg>
<svg style="left:1670.6px;top:390px" width="11" height="13" viewBox="0 0 11 13"><path d="M2.8 0.6 H7.4 L10.1 3.3 V9.8" fill="none" stroke="#4d6fe0" stroke-width="1.1"/><path d="M0.4 2 H5.8 L8.5 4.7 V12 H0.4 Z" fill="#4d6fe0"/><path d="M2.4 6.5 H6.3 M2.4 8.7 H6.3" stroke="#e8edfc" stroke-width="1"/></svg>
<svg style="left:0;top:0" width="1920" height="886" viewBox="0 0 1920 886"><g shape-rendering="crispEdges" stroke="#ccc" stroke-width="1"><path d="M1160.5 558.5 H1801.5"/><path d="M1160.5 540.5 H1801.5"/><path d="M1160.5 522.5 H1801.5"/><path d="M1160.5 505.5 H1801.5"/><path d="M1160.5 487.5 H1801.5"/></g><g shape-rendering="crispEdges" stroke="#333" stroke-width="1"><path d="M1160.5 487 V577"/><path d="M1160.5 576.5 H1801.5"/><path d="M1155.5 576.5 H1160.5"/><path d="M1155.5 558.5 H1160.5"/><path d="M1155.5 540.5 H1160.5"/><path d="M1155.5 522.5 H1160.5"/><path d="M1155.5 505.5 H1160.5"/><path d="M1155.5 487.5 H1160.5"/><path d="M1222.5 576.5 V581.5"/><path d="M1326.5 576.5 V581.5"/><path d="M1429.5 576.5 V581.5"/><path d="M1533.5 576.5 V581.5"/><path d="M1636.5 576.5 V581.5"/><path d="M1740.5 576.5 V581.5"/></g><path d="M1170.85 487.2 H1791.85" stroke="#7ba5f1" stroke-width="2" fill="none"/><circle cx="1170.85" cy="487.2" r="2" fill="#fff" stroke="#7ba5f1" stroke-width="1"/><circle cx="1191.55" cy="487.2" r="2" fill="#fff" stroke="#7ba5f1" stroke-width="1"/><circle cx="1212.25" cy="487.2" r="2" fill="#fff" stroke="#7ba5f1" stroke-width="1"/><circle cx="1232.95" cy="487.2" r="2" fill="#fff" stroke="#7ba5f1" stroke-width="1"/><circle cx="1253.65" cy="487.2" r="2" fill="#fff" stroke="#7ba5f1" stroke-width="1"/><circle cx="1274.35" cy="487.2" r="2" fill="#fff" stroke="#7ba5f1" stroke-width="1"/><circle cx="1295.05" cy="487.2" r="2" fill="#fff" stroke="#7ba5f1" stroke-width="1"/><circle cx="1315.75" cy="487.2" r="2" fill="#fff" stroke="#7ba5f1" stroke-width="1"/><circle cx="1336.45" cy="487.2" r="2" fill="#fff" stroke="#7ba5f1" stroke-width="1"/><circle cx="1357.15" cy="487.2" r="2" fill="#fff" stroke="#7ba5f1" stroke-width="1"/><circle cx="1377.85" cy="487.2" r="2" fill="#fff" stroke="#7ba5f1" stroke-width="1"/><circle cx="1398.55" cy="487.2" r="2" fill="#fff" stroke="#7ba5f1" stroke-width="1"/><circle cx="1419.25" cy="487.2" r="2" fill="#fff" stroke="#7ba5f1" stroke-width="1"/><circle cx="1439.95" cy="487.2" r="2" fill="#fff" stroke="#7ba5f1" stroke-width="1"/><circle cx="1460.65" cy="487.2" r="2" fill="#fff" stroke="#7ba5f1" stroke-width="1"/><circle cx="1481.35" cy="487.2" r="2" fill="#fff" stroke="#7ba5f1" stroke-width="1"/><circle cx="1502.05" cy="487.2" r="2" fill="#fff" stroke="#7ba5f1" stroke-width="1"/><circle cx="1522.75" cy="487.2" r="2" fill="#fff" stroke="#7ba5f1" stroke-width="1"/><circle cx="1543.45" cy="487.2" r="2" fill="#fff" stroke="#7ba5f1" stroke-width="1"/><circle cx="1564.15" cy="487.2" r="2" fill="#fff" stroke="#7ba5f1" stroke-width="1"/><circle cx="1584.85" cy="487.2" r="2" fill="#fff" stroke="#7ba5f1" stroke-width="1"/><circle cx="1605.55" cy="487.2" r="2" fill="#fff" stroke="#7ba5f1" stroke-width="1"/><circle cx="1626.25" cy="487.2" r="2" fill="#fff" stroke="#7ba5f1" stroke-width="1"/><circle cx="1646.95" cy="487.2" r="2" fill="#fff" stroke="#7ba5f1" stroke-width="1"/><circle cx="1667.65" cy="487.2" r="2" fill="#fff" stroke="#7ba5f1" stroke-width="1"/><circle cx="1688.35" cy="487.2" r="2" fill="#fff" stroke="#7ba5f1" stroke-width="1"/><circle cx="1709.05" cy="487.2" r="2" fill="#fff" stroke="#7ba5f1" stroke-width="1"/><circle cx="1729.75" cy="487.2" r="2" fill="#fff" stroke="#7ba5f1" stroke-width="1"/><circle cx="1750.45" cy="487.2" r="2" fill="#fff" stroke="#7ba5f1" stroke-width="1"/><circle cx="1771.15" cy="487.2" r="2" fill="#fff" stroke="#7ba5f1" stroke-width="1"/><circle cx="1791.85" cy="487.2" r="2" fill="#fff" stroke="#7ba5f1" stroke-width="1"/><path d="M1447.5 438 H1472.5" stroke="#8db1f4" stroke-width="1.2"/><circle cx="1460.2" cy="438" r="5.2" fill="#fff" stroke="#7ba5f1" stroke-width="1.1"/></svg>
<div style="position:absolute;top:427.00px;line-height:20px;font-size:12px;color:#333;font-weight:normal;white-space:nowrap;left:1479.00px;">传输率</div>
<div style="position:absolute;top:454.80px;line-height:20px;font-size:12px;color:#333;font-weight:normal;white-space:nowrap;left:1142.50px;">传输率</div>
<div style="position:absolute;top:565.60px;line-height:20px;font-size:12px;color:#333;font-weight:normal;white-space:nowrap;right:767.70px;text-align:right;letter-spacing:.15px;">0</div>
<div style="position:absolute;top:547.60px;line-height:20px;font-size:12px;color:#333;font-weight:normal;white-space:nowrap;right:767.70px;text-align:right;letter-spacing:.15px;">20</div>
<div style="position:absolute;top:529.60px;line-height:20px;font-size:12px;color:#333;font-weight:normal;white-space:nowrap;right:767.70px;text-align:right;letter-spacing:.15px;">40</div>
<div style="position:absolute;top:511.60px;line-height:20px;font-size:12px;color:#333;font-weight:normal;white-space:nowrap;right:767.70px;text-align:right;letter-spacing:.15px;">60</div>
<div style="position:absolute;top:494.60px;line-height:20px;font-size:12px;color:#333;font-weight:normal;white-space:nowrap;right:767.70px;text-align:right;letter-spacing:.15px;">80</div>
<div style="position:absolute;top:476.60px;line-height:20px;font-size:12px;color:#333;font-weight:normal;white-space:nowrap;right:767.70px;text-align:right;letter-spacing:.15px;">100</div>
<div style="position:absolute;top:578.60px;line-height:20px;font-size:12px;color:#333;font-weight:normal;white-space:nowrap;left:971.10px;width:400px;text-align:center;letter-spacing:.5px;">2026-03-17</div>
<div style="position:absolute;top:578.60px;line-height:20px;font-size:12px;color:#333;font-weight:normal;white-space:nowrap;left:1074.60px;width:400px;text-align:center;letter-spacing:.5px;">2026-03-22</div>
<div style="position:absolute;top:578.60px;line-height:20px;font-size:12px;color:#333;font-weight:normal;white-space:nowrap;left:1178.10px;width:400px;text-align:center;letter-spacing:.5px;">2026-03-27</div>
<div style="position:absolute;top:578.60px;line-height:20px;font-size:12px;color:#333;font-weight:normal;white-space:nowrap;left:1281.60px;width:400px;text-align:center;letter-spacing:.5px;">2026-04-01</div>
<div style="position:absolute;top:578.60px;line-height:20px;font-size:12px;color:#333;font-weight:normal;white-space:nowrap;left:1385.10px;width:400px;text-align:center;letter-spacing:.5px;">2026-04-06</div>
<div style="position:absolute;top:578.60px;line-height:20px;font-size:12px;color:#333;font-weight:normal;white-space:nowrap;left:1488.60px;width:400px;text-align:center;letter-spacing:.5px;">2026-04-11</div>
<div style="position:absolute;top:578.60px;line-height:20px;font-size:12px;color:#333;font-weight:normal;white-space:nowrap;left:1592.10px;width:400px;text-align:center;letter-spacing:.5px;">2026-04-16</div>
<div style="position:absolute;left:240px;top:655px;width:821px;height:240px;background:#fff"></div>
<div style="position:absolute;left:241px;top:663px;width:4px;height:29px;background:#5b80fb"></div>
<div style="position:absolute;left:241px;top:699px;width:819px;height:1px;background:#e4e4e4"></div>
<div style="position:absolute;top:669.50px;line-height:20px;font-size:17px;color:#1a1a1a;font-weight:bold;white-space:nowrap;left:256.00px;">废水污染物全年排放量</div>
<div style="position:absolute;top:667.80px;line-height:20px;font-size:14.8px;color:#999;font-weight:normal;white-space:nowrap;right:888.20px;text-align:right;">2026-04-17 17:20</div>
<svg style="left:1036px;top:671px" width="15" height="14" viewBox="0 0 15 14"><g fill="none" stroke="#4d7cf5" stroke-width="1.6"><path d="M4.1 2.1 A5.5 5.5 0 0 1 12.9 6.2"/><path d="M10.7 10.9 A5.5 5.5 0 0 1 1.9 6.8"/></g><path d="M10.9 5.9 H14.9 L12.9 9.1 Z" fill="#4d7cf5"/><path d="M0 7.1 H3.9 L1.95 3.9 Z" fill="#4d7cf5"/></svg>
<div style="position:absolute;left:907.5px;top:669px;width:2px;height:17px;background:#d9d9d9"></div>
<div style="position:absolute;top:668.90px;line-height:20px;font-size:12px;color:#4d6fe0;font-weight:normal;white-space:nowrap;right:1018.50px;text-align:right;">查看更多</div>
<div style="position:absolute;left:853.5px;top:683px;width:48px;height:1px;background:#4d6fe0"></div>
<div style="position:absolute;left:256px;top:715px;width:789px;height:180px;background:#fff;border:1px solid #e6e9f0;"></div>
<div style="position:absolute;left:257px;top:716px;width:787px;height:41px;background:#f5f7fa"></div>
<div style="position:absolute;left:346px;top:715px;width:1px;height:180px;background:#e6e9f0"></div>
<div style="position:absolute;left:486px;top:715px;width:1px;height:180px;background:#e6e9f0"></div>
<div style="position:absolute;left:690px;top:715px;width:1px;height:180px;background:#e6e9f0"></div>
<div style="position:absolute;left:894px;top:715px;width:1px;height:180px;background:#e6e9f0"></div>
<div style="position:absolute;left:256px;top:757px;width:789px;height:1px;background:#e6e9f0"></div>
<div style="position:absolute;left:256px;top:799px;width:789px;height:1px;background:#e6e9f0"></div>
<div style="position:absolute;left:256px;top:841px;width:789px;height:1px;background:#e6e9f0"></div>
<div style="position:absolute;left:256px;top:883px;width:789px;height:1px;background:#e6e9f0"></div>
<div style="position:absolute;top:727.00px;line-height:20px;font-size:14px;color:#666a70;font-weight:bold;white-space:nowrap;left:271.00px;">污染物</div>
<div style="position:absolute;top:727.00px;line-height:20px;font-size:14px;color:#666a70;font-weight:bold;white-space:nowrap;left:361.00px;">涉及排放企业</div>
<svg style="left:452.8px;top:731.8px" width="8" height="12" viewBox="0 0 8 12"><path d="M0 4.8 L4 0 L8 4.8 Z M0 6.8 L4 11.6 L8 6.8 Z" fill="#c0c4cc"/></svg>
<div style="position:absolute;top:727.00px;line-height:20px;font-size:14px;color:#666a70;font-weight:bold;white-space:nowrap;left:501.00px;">全年累计</div>
<svg style="left:564.8px;top:731.8px" width="8" height="12" viewBox="0 0 8 12"><path d="M0 4.8 L4 0 L8 4.8 Z M0 6.8 L4 11.6 L8 6.8 Z" fill="#c0c4cc"/></svg>
<div style="position:absolute;top:727.00px;line-height:20px;font-size:14px;color:#666a70;font-weight:bold;white-space:nowrap;left:705.00px;">本月累计</div>
<svg style="left:768.8px;top:731.8px" width="8" height="12" viewBox="0 0 8 12"><path d="M0 4.8 L4 0 L8 4.8 Z M0 6.8 L4 11.6 L8 6.8 Z" fill="#c0c4cc"/></svg>
<div style="position:absolute;top:727.00px;line-height:20px;font-size:14px;color:#666a70;font-weight:bold;white-space:nowrap;left:909.00px;">昨日累计</div>
<svg style="left:972.8px;top:731.8px" width="8" height="12" viewBox="0 0 8 12"><path d="M0 4.8 L4 0 L8 4.8 Z M0 6.8 L4 11.6 L8 6.8 Z" fill="#c0c4cc"/></svg>
<div style="position:absolute;top:769.00px;line-height:20px;font-size:14px;color:#606266;font-weight:normal;white-space:nowrap;left:271.00px;">废水流量</div>
<div style="position:absolute;top:769.00px;line-height:20px;font-size:14px;color:#606266;font-weight:normal;white-space:nowrap;left:361.00px;"><b style="letter-spacing:.3px;font-size:14.6px">89</b>家</div>
<div style="position:absolute;top:769.00px;line-height:20px;font-size:14px;color:#606266;font-weight:normal;white-space:nowrap;left:501.00px;"><b style="letter-spacing:.3px;font-size:14.6px">5.03</b>亿吨</div>
<div style="position:absolute;top:769.00px;line-height:20px;font-size:14px;color:#606266;font-weight:normal;white-space:nowrap;left:705.00px;"><b style="letter-spacing:.3px;font-size:14.6px">0.78</b>亿吨</div>
<div style="position:absolute;top:769.00px;line-height:20px;font-size:14px;color:#606266;font-weight:normal;white-space:nowrap;left:909.00px;"><b style="letter-spacing:.3px;font-size:14.6px">297.20</b>万吨</div>
<div style="position:absolute;top:811.00px;line-height:20px;font-size:14px;color:#606266;font-weight:normal;white-space:nowrap;left:271.00px;">COD</div>
<div style="position:absolute;top:811.00px;line-height:20px;font-size:14px;color:#606266;font-weight:normal;white-space:nowrap;left:361.00px;"><b style="letter-spacing:.3px;font-size:14.6px">75</b>家</div>
<div style="position:absolute;top:811.00px;line-height:20px;font-size:14px;color:#606266;font-weight:normal;white-space:nowrap;left:501.00px;"><b style="letter-spacing:.3px;font-size:14.6px">1479.34</b>吨</div>
<div style="position:absolute;top:811.00px;line-height:20px;font-size:14px;color:#606266;font-weight:normal;white-space:nowrap;left:705.00px;"><b style="letter-spacing:.3px;font-size:14.6px">224.85</b>吨</div>
<div style="position:absolute;top:811.00px;line-height:20px;font-size:14px;color:#606266;font-weight:normal;white-space:nowrap;left:909.00px;"><b style="letter-spacing:.3px;font-size:14.6px">14.01</b>吨</div>
<div style="position:absolute;top:853.00px;line-height:20px;font-size:14px;color:#606266;font-weight:normal;white-space:nowrap;left:271.00px;">氨氮</div>
<div style="position:absolute;top:853.00px;line-height:20px;font-size:14px;color:#606266;font-weight:normal;white-space:nowrap;left:361.00px;"><b style="letter-spacing:.3px;font-size:14.6px">67</b>家</div>
<div style="position:absolute;top:853.00px;line-height:20px;font-size:14px;color:#606266;font-weight:normal;white-space:nowrap;left:501.00px;"><b style="letter-spacing:.3px;font-size:14.6px">26.77</b>吨</div>
<div style="position:absolute;top:853.00px;line-height:20px;font-size:14px;color:#606266;font-weight:normal;white-space:nowrap;left:705.00px;"><b style="letter-spacing:.3px;font-size:14.6px">3.31</b>吨</div>
<div style="position:absolute;top:853.00px;line-height:20px;font-size:14px;color:#606266;font-weight:normal;white-space:nowrap;left:909.00px;"><b style="letter-spacing:.3px;font-size:14.6px">0.18</b>吨</div>
<div style="position:absolute;left:1070px;top:655px;width:821px;height:240px;background:#fff"></div>
<div style="position:absolute;left:1071px;top:663px;width:4px;height:29px;background:#5b80fb"></div>
<div style="position:absolute;left:1071px;top:699px;width:819px;height:1px;background:#e4e4e4"></div>
<div style="position:absolute;top:669.50px;line-height:20px;font-size:17px;color:#1a1a1a;font-weight:bold;white-space:nowrap;left:1086.00px;">废气污染物全年排放量</div>
<div style="position:absolute;top:667.80px;line-height:20px;font-size:14.8px;color:#999;font-weight:normal;white-space:nowrap;right:58.20px;text-align:right;">2026-04-17 17:20</div>
<svg style="left:1866px;top:671px" width="15" height="14" viewBox="0 0 15 14"><g fill="none" stroke="#4d7cf5" stroke-width="1.6"><path d="M4.1 2.1 A5.5 5.5 0 0 1 12.9 6.2"/><path d="M10.7 10.9 A5.5 5.5 0 0 1 1.9 6.8"/></g><path d="M10.9 5.9 H14.9 L12.9 9.1 Z" fill="#4d7cf5"/><path d="M0 7.1 H3.9 L1.95 3.9 Z" fill="#4d7cf5"/></svg>
<div style="position:absolute;left:1737.5px;top:669px;width:2px;height:17px;background:#d9d9d9"></div>
<div style="position:absolute;top:668.90px;line-height:20px;font-size:12px;color:#4d6fe0;font-weight:normal;white-space:nowrap;right:188.50px;text-align:right;">查看更多</div>
<div style="position:absolute;left:1683.5px;top:683px;width:48px;height:1px;background:#4d6fe0"></div>
<div style="position:absolute;left:1086px;top:715px;width:789px;height:180px;background:#fff;border:1px solid #e6e9f0;"></div>
<div style="position:absolute;left:1087px;top:716px;width:787px;height:41px;background:#f5f7fa"></div>
<div style="position:absolute;left:1177px;top:715px;width:1px;height:180px;background:#e6e9f0"></div>
<div style="position:absolute;left:1317px;top:715px;width:1px;height:180px;background:#e6e9f0"></div>
<div style="position:absolute;left:1521px;top:715px;width:1px;height:180px;background:#e6e9f0"></div>
<div style="position:absolute;left:1725px;top:715px;width:1px;height:180px;background:#e6e9f0"></div>
<div style="position:absolute;left:1086px;top:757px;width:789px;height:1px;background:#e6e9f0"></div>
<div style="position:absolute;left:1086px;top:799px;width:789px;height:1px;background:#e6e9f0"></div>
<div style="position:absolute;left:1086px;top:841px;width:789px;height:1px;background:#e6e9f0"></div>
<div style="position:absolute;left:1086px;top:883px;width:789px;height:1px;background:#e6e9f0"></div>
<div style="position:absolute;top:727.00px;line-height:20px;font-size:14px;color:#666a70;font-weight:bold;white-space:nowrap;left:1101.00px;">污染物</div>
<div style="position:absolute;top:727.00px;line-height:20px;font-size:14px;color:#666a70;font-weight:bold;white-space:nowrap;left:1192.00px;">涉及排放企业</div>
<svg style="left:1283.8px;top:731.8px" width="8" height="12" viewBox="0 0 8 12"><path d="M0 4.8 L4 0 L8 4.8 Z M0 6.8 L4 11.6 L8 6.8 Z" fill="#c0c4cc"/></svg>
<div style="position:absolute;top:727.00px;line-height:20px;font-size:14px;color:#666a70;font-weight:bold;white-space:nowrap;left:1332.00px;">全年累计</div>
<svg style="left:1395.8px;top:731.8px" width="8" height="12" viewBox="0 0 8 12"><path d="M0 4.8 L4 0 L8 4.8 Z M0 6.8 L4 11.6 L8 6.8 Z" fill="#c0c4cc"/></svg>
<div style="position:absolute;top:727.00px;line-height:20px;font-size:14px;color:#666a70;font-weight:bold;white-space:nowrap;left:1536.00px;">本月累计</div>
<svg style="left:1599.8px;top:731.8px" width="8" height="12" viewBox="0 0 8 12"><path d="M0 4.8 L4 0 L8 4.8 Z M0 6.8 L4 11.6 L8 6.8 Z" fill="#c0c4cc"/></svg>
<div style="position:absolute;top:727.00px;line-height:20px;font-size:14px;color:#666a70;font-weight:bold;white-space:nowrap;left:1740.00px;">昨日累计</div>
<svg style="left:1803.8px;top:731.8px" width="8" height="12" viewBox="0 0 8 12"><path d="M0 4.8 L4 0 L8 4.8 Z M0 6.8 L4 11.6 L8 6.8 Z" fill="#c0c4cc"/></svg>
<div style="position:absolute;top:769.00px;line-height:20px;font-size:14px;color:#606266;font-weight:normal;white-space:nowrap;left:1101.00px;">废气流量</div>
<div style="position:absolute;top:769.00px;line-height:20px;font-size:14px;color:#606266;font-weight:normal;white-space:nowrap;left:1192.00px;"><b style="letter-spacing:.3px;font-size:14.6px">347</b>家</div>
<div style="position:absolute;top:769.00px;line-height:20px;font-size:14px;color:#606266;font-weight:normal;white-space:nowrap;left:1332.00px;"><b style="letter-spacing:.3px;font-size:14.6px">1038.98</b>亿标立方米</div>
<div style="position:absolute;top:769.00px;line-height:20px;font-size:14px;color:#606266;font-weight:normal;white-space:nowrap;left:1536.00px;"><b style="letter-spacing:.3px;font-size:14.6px">141.89</b>亿标立方米</div>
<div style="position:absolute;top:769.00px;line-height:20px;font-size:14px;color:#606266;font-weight:normal;white-space:nowrap;left:1740.00px;"><b style="letter-spacing:.3px;font-size:14.6px">9.38</b>亿标立方米</div>
<div style="position:absolute;top:811.00px;line-height:20px;font-size:14px;color:#606266;font-weight:normal;white-space:nowrap;left:1101.00px;">氮氧化物</div>
<div style="position:absolute;top:811.00px;line-height:20px;font-size:14px;color:#606266;font-weight:normal;white-space:nowrap;left:1192.00px;"><b style="letter-spacing:.3px;font-size:14.6px">85</b>家</div>
<div style="position:absolute;top:811.00px;line-height:20px;font-size:14px;color:#606266;font-weight:normal;white-space:nowrap;left:1332.00px;"><b style="letter-spacing:.3px;font-size:14.6px">1054.05</b>吨</div>
<div style="position:absolute;top:811.00px;line-height:20px;font-size:14px;color:#606266;font-weight:normal;white-space:nowrap;left:1536.00px;"><b style="letter-spacing:.3px;font-size:14.6px">168.44</b>吨</div>
<div style="position:absolute;top:811.00px;line-height:20px;font-size:14px;color:#606266;font-weight:normal;white-space:nowrap;left:1740.00px;"><b style="letter-spacing:.3px;font-size:14.6px">11.92</b>吨</div>
<div style="position:absolute;top:853.00px;line-height:20px;font-size:14px;color:#606266;font-weight:normal;white-space:nowrap;left:1101.00px;">二氧化硫</div>
<div style="position:absolute;top:853.00px;line-height:20px;font-size:14px;color:#606266;font-weight:normal;white-space:nowrap;left:1192.00px;"><b style="letter-spacing:.3px;font-size:14.6px">75</b>家</div>
<div style="position:absolute;top:853.00px;line-height:20px;font-size:14px;color:#606266;font-weight:normal;white-space:nowrap;left:1332.00px;"><b style="letter-spacing:.3px;font-size:14.6px">302.35</b>吨</div>
<div style="position:absolute;top:853.00px;line-height:20px;font-size:14px;color:#606266;font-weight:normal;white-space:nowrap;left:1536.00px;"><b style="letter-spacing:.3px;font-size:14.6px">56.42</b>吨</div>
<div style="position:absolute;top:853.00px;line-height:20px;font-size:14px;color:#606266;font-weight:normal;white-space:nowrap;left:1740.00px;"><b style="letter-spacing:.3px;font-size:14.6px">3.91</b>吨</div>
</body></html>
